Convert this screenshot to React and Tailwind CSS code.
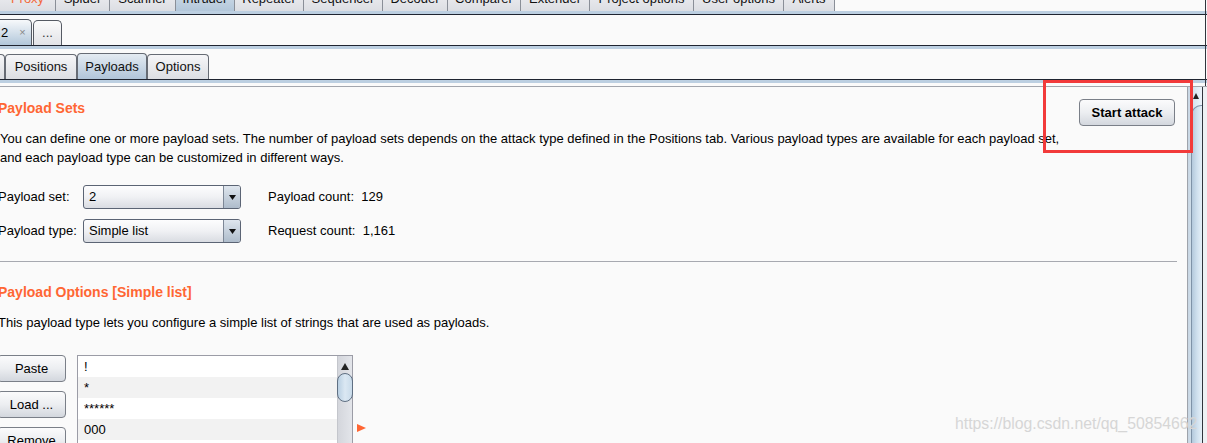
import React from "react";

const topTabs = [
  ["Proxy", 56, "orange"],
  ["Spider", 54],
  ["Scanner", 66],
  ["Intruder", 59, "sel"],
  ["Repeater", 69],
  ["Sequencer", 79],
  ["Decoder", 65],
  ["Comparer", 73],
  ["Extender", 69],
  ["Project options", 104],
  ["User options", 90],
  ["Alerts", 51],
];

const items = ["!", "*", "******", "000", "0", "00", "1", "11"];

function Dropdown({ value }) {
  return (
    <div className="w-[158px] h-[24px] flex rounded-[3px] border border-[#5b6474] bg-gradient-to-b from-[#fdfdfe] via-[#f0f1f4] to-[#d9dce2] overflow-hidden">
      <div className="flex-1 flex items-center pl-[5px] text-[13px] text-black">{value}</div>
      <div className="w-[17px] border-l border-[#7d8796] bg-gradient-to-b from-[#dfe6ee] to-[#aebccb] flex items-center justify-center">
        <svg width="7" height="5" viewBox="0 0 7 5">
          <path d="M0 0 H7 L3.5 5 Z" fill="#111" />
        </svg>
      </div>
    </div>
  );
}

function Btn({ children, className = "" }) {
  return (
    <div
      className={
        "h-[27px] flex items-center justify-center rounded-[4px] border border-[#7a7f88] bg-gradient-to-b from-[#fbfbfc] via-[#eceef1] to-[#d3d7de] text-[13px] text-black " +
        className
      }
    >
      {children}
    </div>
  );
}

export default function App() {
  return (
    <div
      className="w-[1207px] h-[443px] overflow-hidden bg-[#fafafa] relative text-black"
      style={{ fontFamily: '"Liberation Sans", Arial, sans-serif' }}
    >
      {/* Row 1: main tabs */}
      <div className="h-[11px] flex items-end overflow-hidden">
        {topTabs.map(([t, w, k]) => (
          <div
            key={t}
            style={{ width: w }}
            className={
              "h-[24px] shrink-0 flex items-center justify-center text-[13px] border-r border-[#8a8f98] " +
              (k === "sel"
                ? "bg-gradient-to-b from-[#d6e1ec] to-[#b3c7da] "
                : "bg-gradient-to-b from-[#f2f2f5] to-[#dcdee3] ") +
              (k === "orange" ? "text-[#f26a3a]" : "text-[#111]")
            }
          >
            {t}
          </div>
        ))}
      </div>
      <div className="h-[3px] bg-[#bccfe1]" />
      <div className="h-px bg-[#1f2430]" />

      {/* Row 2: numbered tabs */}
      <div className="h-[30px] flex items-end">
        <div className="w-[33px] h-[26px] -ml-px rounded-tr-[5px] border border-b-0 border-[#555a63] bg-gradient-to-b from-[#f7f9fb] to-[#b2c7da] flex items-center text-[13px]">
          <span className="ml-[1px]">2</span>
          <span className="ml-[11px] text-[11px] text-[#888]">×</span>
        </div>
        <div className="w-[29px] h-[25px] ml-px rounded-t-[5px] border border-b-0 border-[#555a63] bg-gradient-to-b from-[#fbfbfb] to-[#e2e3e7] flex items-center justify-center text-[13px] text-[#333]">
          ...
        </div>
      </div>
      <div className="h-px bg-[#1f2430]" />
      <div className="h-[3px] bg-[#bccfe1]" />
      <div className="h-[4px]" />

      {/* Row 3: sub tabs */}
      <div className="h-[26px] flex items-end">
        <div className="w-[5px] h-[25px] rounded-tr-[4px] border border-l-0 border-b-0 border-[#666b74] bg-gradient-to-b from-[#f6f6f8] to-[#dcdee3]" />
        <div className="w-[72px] h-[25px] rounded-t-[4px] border border-b-0 border-[#666b74] bg-gradient-to-b from-[#f6f6f8] to-[#dcdee3] flex items-center justify-center text-[13px] text-[#111]">
          Positions
        </div>
        <div className="w-[70px] h-[26px] rounded-t-[4px] border border-b-0 border-[#666b74] bg-gradient-to-b from-[#e4ebf2] to-[#b1c5d9] flex items-center justify-center text-[13px] text-[#111]">
          Payloads
        </div>
        <div className="w-[62px] h-[25px] rounded-t-[4px] border border-b-0 border-[#666b74] bg-gradient-to-b from-[#f6f6f8] to-[#dcdee3] flex items-center justify-center text-[13px] text-[#111]">
          Options
        </div>
      </div>
      <div className="h-px bg-[#1f2430]" />
      <div className="h-[3px] bg-[#bccfe1]" />
      <div className="h-[3px]" />

      {/* Content area */}
      <div className="flex h-[357px] border-t border-[#a3a6ad]">
        <div className="w-[1187px] shrink-0 overflow-hidden pr-[10px]">
          <div className="-ml-[2px]">
            {/* Payload Sets header */}
            <div className="flex items-start justify-between mt-[12px]">
              <div className="mt-px text-[14px] leading-[17px] font-bold text-[#ff6633]">Payload Sets</div>
              <Btn className="w-[96px] font-bold mr-[2px]">Start attack</Btn>
            </div>
            <div className="mt-[3px] text-[13px] leading-[19px] pl-[2px]">
              <div>
                You can define one or more payload sets. The number of payload sets depends on the attack type defined in the Positions tab. Various payload types are available for each payload set,
              </div>
              <div>and each payload type can be customized in different ways.</div>
            </div>

            <div className="mt-[18px] flex flex-col gap-[10px] text-[13px]">
              <div className="flex items-center">
                <div className="w-[85px]">Payload set:</div>
                <Dropdown value="2" />
                <div className="ml-[27px]">Payload count:&nbsp; 129</div>
              </div>
              <div className="flex items-center">
                <div className="w-[85px]">Payload type:</div>
                <Dropdown value="Simple list" />
                <div className="ml-[27px]">Request count:&nbsp; 1,161</div>
              </div>
            </div>

            <div className="mt-[18px] h-px bg-[#a7a9b0] ml-[2px]" />

            <div className="mt-[22px] text-[14px] leading-[17px] font-bold text-[#ff6633]">
              Payload Options [Simple list]
            </div>
            <div className="mt-[12px] text-[13px] leading-[19px]">
              This payload type lets you configure a simple list of strings that are used as payloads.
            </div>

            <div className="mt-[23px] flex items-start">
              <div className="w-[69px] -ml-px flex flex-col gap-[9px]">
                <Btn>Paste</Btn>
                <Btn>Load ...</Btn>
                <Btn>Remove</Btn>
              </div>
              <div className="ml-[11px] w-[276px] h-[120px] border border-[#9b9ca6] bg-white flex">
                <div className="flex-1 flex flex-col">
                  {items.map((it, i) => (
                    <div
                      key={i}
                      className={
                        "h-[21px] shrink-0 flex items-center pl-[6px] text-[13px] " +
                        (i % 2 ? "bg-[#f2f2f2]" : "bg-white")
                      }
                    >
                      {it}
                    </div>
                  ))}
                </div>
                <div className="w-[15px] bg-gradient-to-r from-[#d4d6dc] to-[#e3e5ea] border-l border-[#c4c6cc] relative">
                  <svg className="absolute left-[3px] top-[7px]" width="8" height="7" viewBox="0 0 8 7">
                    <path d="M4 0 L8 7 H0 Z" fill="#222" />
                  </svg>
                  <div className="absolute -left-px top-[17px] w-[16px] h-[29px] rounded-full border border-[#5f6f82] bg-gradient-to-r from-[#b9cfe2] via-[#dbe8f3] to-[#c9dbea]" />
                </div>
              </div>
              <svg className="ml-[4px] mt-[69px]" width="9" height="8" viewBox="0 0 9 8">
                <path d="M0 0 L9 4 L0 8 Z" fill="#ff6633" />
              </svg>
            </div>
          </div>
        </div>

        {/* main scrollbar */}
        <div className="w-[15px] shrink-0 border-l border-[#9ea3ab] bg-gradient-to-r from-[#c8d6e3] via-[#d9e7f2] to-[#eef5fb] relative">
          <svg className="absolute left-[5px] top-[6px]" width="6" height="6" viewBox="0 0 6 6">
            <path d="M3 0 L6 6 H0 Z" fill="#222" />
          </svg>
          <div className="absolute left-[3px] right-0 top-[18px] bottom-0 rounded-tl-[10px] border-l border-t border-[#7f93a8] bg-gradient-to-r from-[#b4c9dc] via-[#cfe0ee] to-[#e6f0f8]" />
        </div>
        <div className="w-px shrink-0 bg-[#30343c]" />
        <div className="flex-1 bg-[#eef1f4]" />
      </div>

      {/* right edge line at top */}
      <div className="absolute right-[1px] top-0 h-[86px] w-px bg-[#30343c]" />

      {/* red annotation box */}
      <div className="absolute left-[1043px] top-[80px] w-[150px] h-[73px] border-[3px] border-[#f23a3a]" />

      {/* watermark */}
      <div className="absolute left-[955px] top-[413px] text-[15.8px] leading-[22px] text-[#d6d6d6] whitespace-nowrap">
        https://blog.csdn.net/qq_50854662
      </div>
    </div>
  );
}
